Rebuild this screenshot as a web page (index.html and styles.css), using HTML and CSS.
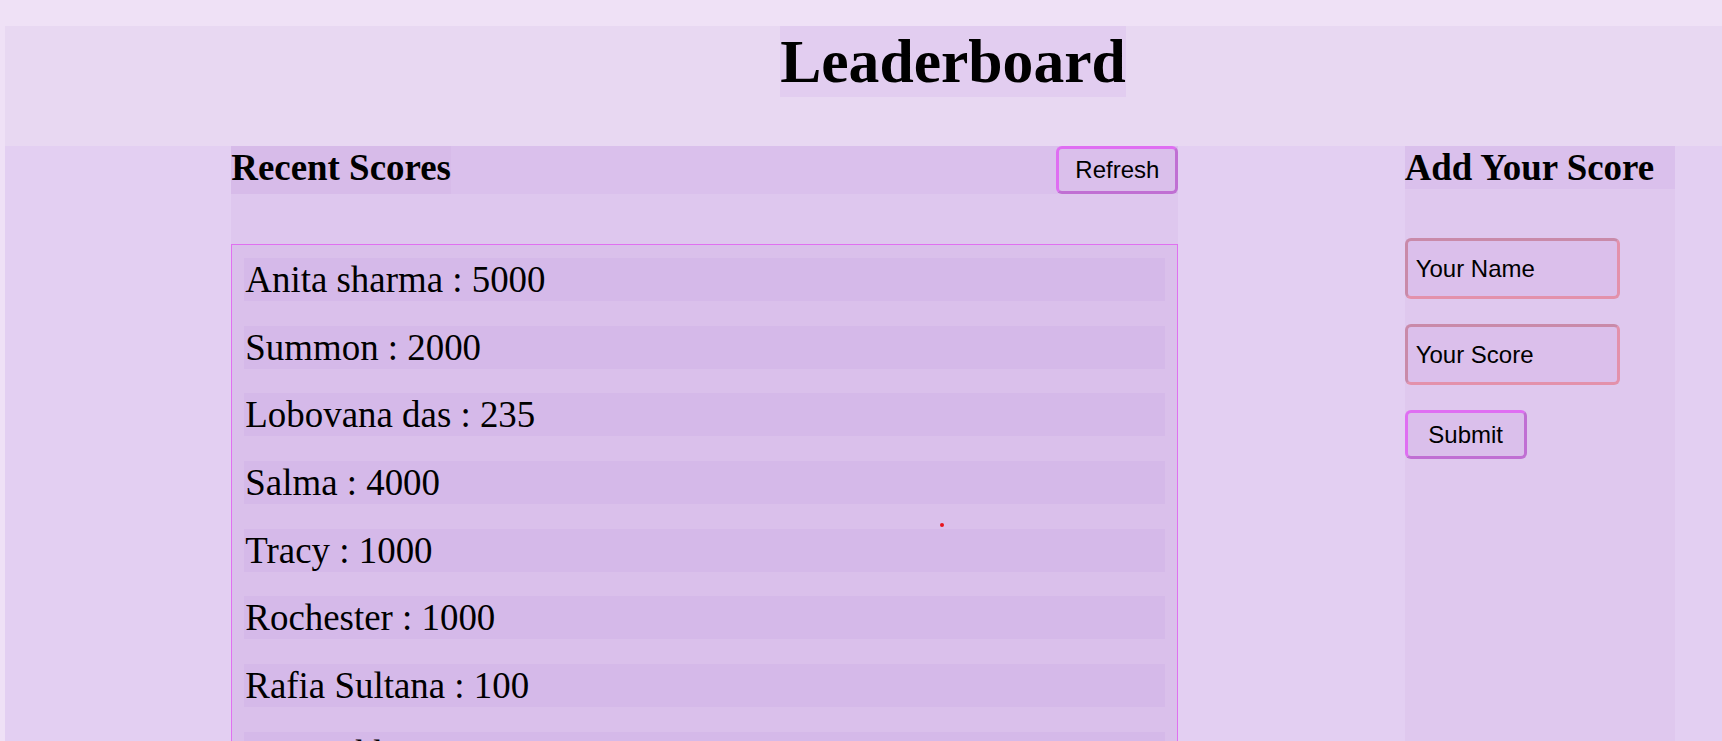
FILE: index.html
```html
<!DOCTYPE html>
<html lang="en">
<head>
<meta charset="utf-8">
<title>Leaderboard</title>
<link rel="stylesheet" href="styles.css">
</head>
<body>
<div class="page">
  <header class="site-header">
    <h1 class="title">Leaderboard</h1>
  </header>
  <main class="board">
    <section class="recent">
      <div class="recent-head">
        <h2 class="section-title">Recent Scores</h2>
        <button class="btn btn-refresh" type="button">Refresh</button>
      </div>
      <ul class="score-list">
        <li class="score-item">Anita sharma : 5000</li>
        <li class="score-item">Summon : 2000</li>
        <li class="score-item">Lobovana das : 235</li>
        <li class="score-item">Salma : 4000</li>
        <li class="score-item">Tracy : 1000</li>
        <li class="score-item">Rochester : 1000</li>
        <li class="score-item">Rafia Sultana : 100</li>
        <li class="score-item">Rana Akhter : 1000</li>
        <li class="score-item">Nadia : 500</li>
      </ul>
    </section>
    <aside class="add">
      <h2 class="section-title add-title">Add Your Score</h2>
      <form class="add-form">
        <input class="field" type="text" placeholder="Your Name">
        <input class="field" type="text" placeholder="Your Score">
        <button class="btn btn-submit" type="button">Submit</button>
      </form>
    </aside>
    <span class="cursor-dot"></span>
  </main>
</div>
</body>
</html>
```
FILE: styles.css
```css
html {
  background: #efe1f6;
  overflow: hidden;
}

body {
  margin: 0;
  font-family: "Liberation Serif", "Times New Roman", serif;
  color: #000;
}

.page {
  width: 1896px;
  margin: 26px 0 0 5px;
  background: #e3cff2;
}

.site-header {
  display: flex;
  justify-content: center;
  background: #e8d8f2;
  padding-bottom: 49px;
}

.title {
  margin: 0;
  font-size: 61.6px;
  line-height: 71px;
  font-weight: bold;
  background: #e2cdf0;
}

.board {
  position: relative;
  display: flex;
  justify-content: space-evenly;
  align-items: stretch;
  min-height: 640px;
}

.recent {
  width: 947px;
  background: #dec7ee;
}

.recent-head {
  display: flex;
  justify-content: space-between;
  align-items: stretch;
  background: #dac0ec;
}

.section-title {
  margin: 0;
  font-size: 36.9px;
  line-height: 43px;
  font-weight: bold;
  background: #d7bbe9;
}

.btn {
  box-sizing: border-box;
  width: 122px;
  height: 48px;
  padding: 0;
  font-family: "Liberation Sans", Arial, sans-serif;
  font-size: 24px;
  color: #000;
  background: #dabfeb;
  border: 3px solid;
  border-color: #df6ef2 #c06fd3 #c06fd3 #df6ef2;
  border-radius: 6px;
  cursor: pointer;
}

.btn-submit {
  height: 49px;
}

.score-list {
  list-style: none;
  margin: 50px 0 0;
  padding: 13px 12px 0;
  border: 1px solid #e070f0;
  background: #dac0eb;
}

.score-item {
  font-size: 36.9px;
  line-height: 43px;
  margin-bottom: 24.67px;
  padding-left: 1px;
  background: #d5b9e9;
}

.add {
  width: 270px;
  background: #dfc8ee;
}

.add-title {
  background: #dac0ec;
}

.add-form {
  display: flex;
  flex-direction: column;
  align-items: flex-start;
  gap: 25px;
  padding-top: 49px;
}

.field {
  box-sizing: border-box;
  width: 215px;
  height: 61px;
  margin: 0;
  padding: 0 8px;
  font-family: "Liberation Sans", Arial, sans-serif;
  font-size: 24px;
  color: #000;
  background: #dbbfeb;
  border: 3px solid;
  border-color: #c98aa9 #e391ab #e391ab #c98aa9;
  border-radius: 6px;
  outline: none;
}

.field::placeholder {
  color: #000;
  opacity: 1;
}

.cursor-dot {
  position: absolute;
  left: 935px;
  top: 377px;
  width: 4px;
  height: 4px;
  border-radius: 50%;
  background: #e8141c;
}
```
